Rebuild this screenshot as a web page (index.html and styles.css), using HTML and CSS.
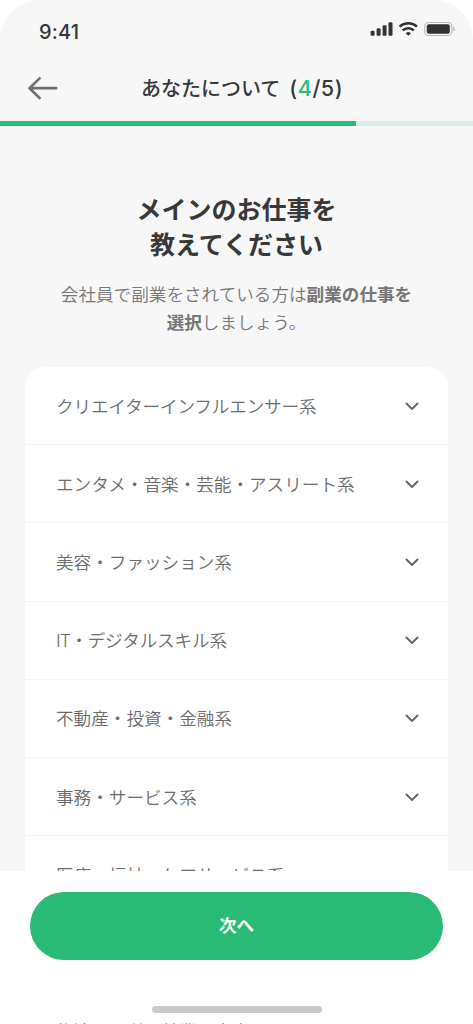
FILE: index.html
```html
<!DOCTYPE html>
<html lang="ja">
<head>
<meta charset="utf-8">
<title>あなたについて</title>
<link rel="stylesheet" href="styles.css">
</head>
<body>
<div class="screen">
  <div class="status">
    <span class="time">9:41</span>
    <svg class="indicators" width="86" height="18" viewBox="0 0 86 18">
      <g fill="#333">
        <rect x="0.6" y="9.8" width="4" height="5" rx="1.2"/>
        <rect x="6.6" y="7.2" width="4" height="7.6" rx="1.2"/>
        <rect x="12.6" y="4.2" width="4" height="10.6" rx="1.2"/>
        <rect x="18.5" y="1.2" width="4" height="13.6" rx="1.2"/>
        <path d="M38.300 14.800l-2.600-2.600a3.900 3.900 0 0 1 5.200 0z"/>
      </g>
      <g fill="none" stroke="#333" stroke-width="2.500">
        <path d="M29.600 5.700a12.800 12.800 0 0 1 17.400 0"/>
        <path d="M32.700 9.400a8.200 8.200 0 0 1 11.200 0"/>
      </g>
      <rect x="54.800" y="1.500" width="27" height="13" rx="3.600" fill="none" stroke="#bdbdbd" stroke-width="1.200"/>
      <rect x="56.800" y="3.300" width="23" height="9.400" rx="2" fill="#333"/>
      <path d="M83.200 5.800q1.800.7 1.800 2.300t-1.800 2.300z" fill="#bdbdbd"/>
    </svg>
  </div>
  <header class="header">
    <svg class="back" width="32" height="24" viewBox="0 0 32 24" fill="none" stroke="#6f6f6f" stroke-width="2.700" stroke-linecap="round" stroke-linejoin="round">
      <path d="M29.200 12.200H2.500M12.600 2.400L2.500 12.200l10.100 9.800"/>
    </svg>
    <h1 class="title">あなたについて<span class="step">(<em>4</em>/5)</span></h1>
  </header>
  <div class="progress"><div class="progress-value"></div></div>
  <main class="content">
    <h2 class="question">メインのお仕事を<br>教えてください</h2>
    <p class="hint">会社員で副業をされている方は<b>副業の仕事を</b><br><b>選択</b>しましょう。</p>
    <ul class="list">
      <li class="row"><span class="label tight">クリエイターインフルエンサー系</span><svg class="chevron" viewBox="0 0 14 9"><path d="M1.500 1.500L7 7l5.500-5.500"/></svg></li>
      <li class="row"><span class="label">エンタメ・音楽・芸能・アスリート系</span><svg class="chevron" viewBox="0 0 14 9"><path d="M1.500 1.500L7 7l5.500-5.500"/></svg></li>
      <li class="row"><span class="label">美容・ファッション系</span><svg class="chevron" viewBox="0 0 14 9"><path d="M1.500 1.500L7 7l5.500-5.500"/></svg></li>
      <li class="row"><span class="label tight"><span class="latin">IT</span>・デジタルスキル系</span><svg class="chevron" viewBox="0 0 14 9"><path d="M1.500 1.500L7 7l5.500-5.500"/></svg></li>
      <li class="row"><span class="label">不動産・投資・金融系</span><svg class="chevron" viewBox="0 0 14 9"><path d="M1.500 1.500L7 7l5.500-5.500"/></svg></li>
      <li class="row"><span class="label">事務・サービス系</span><svg class="chevron" viewBox="0 0 14 9"><path d="M1.500 1.500L7 7l5.500-5.500"/></svg></li>
      <li class="row"><span class="label">医療・福祉・ケアサービス系</span></li>
    </ul>
  </main>
  <footer class="footer">
    <button class="next">次へ</button>
    <div class="home"></div>
  </footer>
  <div class="peek">物流・運送・林業・水産系</div>
</div>
</body>
</html>
```
FILE: styles.css
```css
* { box-sizing: border-box; }
body { margin: 0; background: #fff; }
.screen {
  width: 473px;
  height: 1024px;
  display: flex;
  flex-direction: column;
  overflow: hidden;
  background: #fff;
  color: #383838;
  font-family: "Noto Sans CJK JP", sans-serif;
}
.status {
  flex: none;
  height: 60px;
  padding: 0 17px 0 39px;
  display: flex;
  justify-content: space-between;
  align-items: center;
  background: #f7f7f7;
  border-radius: 40px 40px 0 0;
}
.time { font: 500 20px/24px Inter, sans-serif; letter-spacing: 0.2px; padding-top: 3px; }
.indicators { margin-bottom: 1px; }
.header {
  flex: none;
  height: 61px;
  padding: 0 16px 5px 27px;
  display: grid;
  grid-template-columns: 32px 1fr 32px;
  align-items: center;
  background: #f7f7f7;
}
.title { margin: 0; text-align: center; font-size: 20px; line-height: 30px; font-weight: 500; white-space: nowrap; }
.step { margin-left: 9px; font: 500 21.500px/24px Inter, sans-serif; letter-spacing: 0.5px; }
.step em { font-style: normal; color: #29bb76; }
.progress { flex: none; height: 5px; background: #dcecec; }
.progress-value { width: 356px; height: 5px; background: #29bb76; }
.content { flex: none; height: 745px; padding: 65px 25px 0; overflow: hidden; background: #f7f7f7; }
.question { margin: 0; font-size: 25px; line-height: 35.200px; font-weight: 700; text-align: center; }
.hint { margin: 19px 0 0; font-size: 17.600px; line-height: 28px; text-align: center; color: #777; font-weight: 350; }
.hint b { font-weight: 700; color: #757575; }
.list { list-style: none; margin: 30.600px 0 0; padding: 0; background: #fff; border-radius: 20px 20px 0 0; }
.row {
  height: 78.200px;
  padding: 1px 29px 0 31px;
  display: flex;
  align-items: center;
  justify-content: space-between;
  border-bottom: 1px solid #f5f5f5;
  font-size: 17.600px;
  font-weight: 350;
  color: #6c6c6c;
}
.label { margin-bottom: 2px; }
.tight { letter-spacing: -0.150px; }
.latin { font-family: Inter, sans-serif; font-weight: 300; letter-spacing: -0.800px; }
.chevron { width: 14px; height: 9px; fill: none; stroke: #666; stroke-width: 2; stroke-linecap: round; stroke-linejoin: round; }
.footer { flex: none; height: 149px; padding: 21px 30px 0; }
.next {
  display: block;
  width: 413px;
  height: 68px;
  border: 0;
  border-radius: 34px;
  background: #29bb76;
  color: #fff;
  font: 700 17.600px/66px "Noto Sans CJK JP", sans-serif;
  padding: 0 0 2px;
}
.home { width: 170px; height: 7px; margin: 46px auto 0; border-radius: 4px; background: #c9c9c9; }
.peek { flex: none; height: 4px; padding-left: 56px; font-size: 17.600px; line-height: 22px; font-weight: 350; color: #6c6c6c; overflow: hidden; }
```
